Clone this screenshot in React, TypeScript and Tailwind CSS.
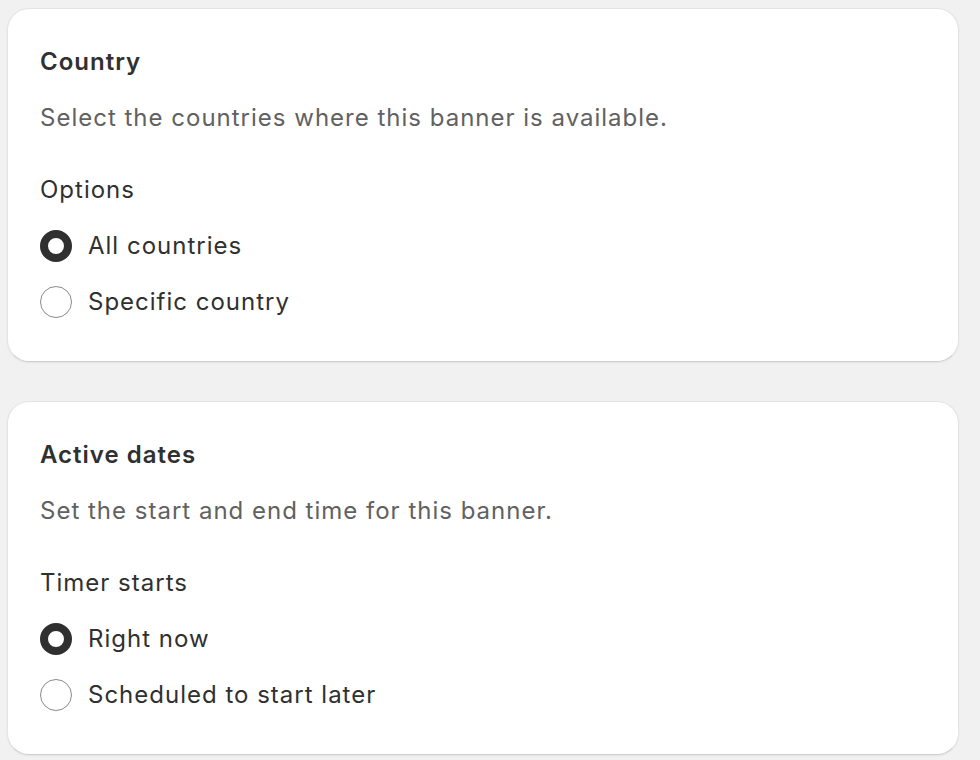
const font = { fontFamily: 'Inter, "Noto Sans", sans-serif' };

type Option = { label: string; checked: boolean };

function Radio({ checked }: { checked: boolean }) {
  return checked ? (
    <span className="box-border block h-8 w-8 shrink-0 rounded-full border-[8px] border-[#303030] bg-white" />
  ) : (
    <span className="box-border block h-8 w-8 shrink-0 rounded-full border border-[#8a8a8a] bg-white" />
  );
}

function SettingsCard({
  title,
  description,
  legend,
  options,
}: {
  title: string;
  description: string;
  legend: string;
  options: Option[];
}) {
  return (
    <div className="rounded-[22px] border border-[#e3e3e3] border-b-[#cfcfcf] bg-white px-8 pt-[35px] pb-[41px] tracking-[1px] shadow-[0_1px_2px_rgba(0,0,0,0.06)]">
      <h2 className="text-[24px] font-semibold leading-[36px] text-[#303030]">{title}</h2>
      <p className="mt-5 text-[24px] leading-[36px] text-[#616161]">{description}</p>
      <p className="mt-9 text-[24px] leading-[36px] text-[#303030]">{legend}</p>
      <div className="mt-5 flex flex-col gap-5">
        {options.map((o) => (
          <label key={o.label} className="flex items-center gap-4">
            <Radio checked={o.checked} />
            <span className="text-[24px] leading-[36px] text-[#303030]">{o.label}</span>
          </label>
        ))}
      </div>
    </div>
  );
}

export default function App() {
  return (
    <div className="h-[760px] overflow-hidden bg-[#f1f1f1] pt-2 pl-[7px] pr-[21px]" style={font}>
      <div className="flex flex-col gap-[39px]">
        <SettingsCard
          title="Country"
          description="Select the countries where this banner is available."
          legend="Options"
          options={[
            { label: 'All countries', checked: true },
            { label: 'Specific country', checked: false },
          ]}
        />
        <SettingsCard
          title="Active dates"
          description="Set the start and end time for this banner."
          legend="Timer starts"
          options={[
            { label: 'Right now', checked: true },
            { label: 'Scheduled to start later', checked: false },
          ]}
        />
      </div>
    </div>
  );
}
